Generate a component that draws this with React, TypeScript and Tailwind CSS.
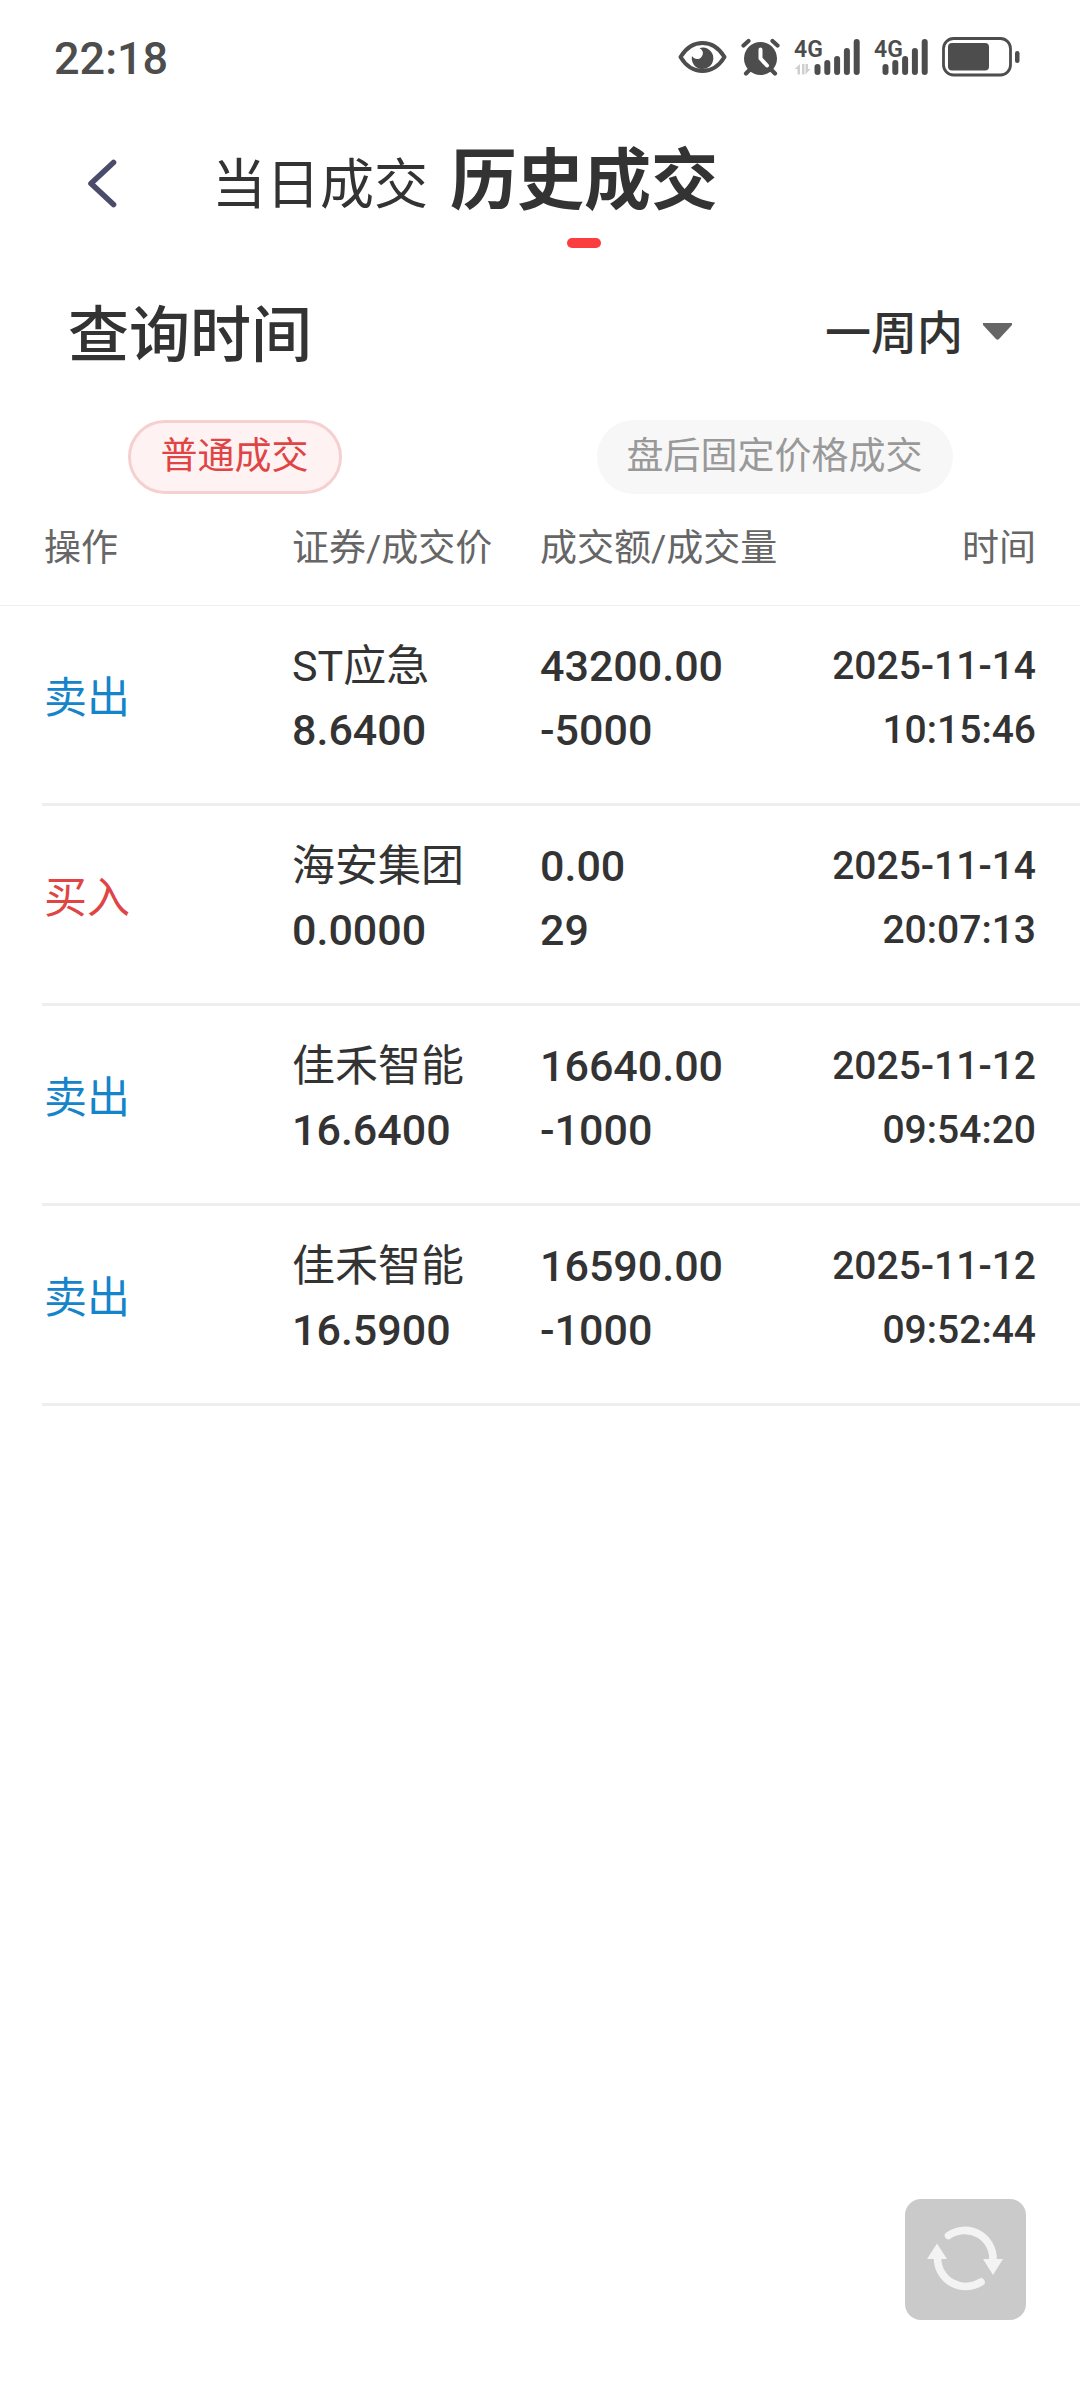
import React from "react";

type Trade = {
  side: "sell" | "buy";
  name: string;
  price: string;
  amount: string;
  volume: string;
  date: string;
  time: string;
};

const trades: Trade[] = [
  { side: "sell", name: "ST应急", price: "8.6400", amount: "43200.00", volume: "-5000", date: "2025-11-14", time: "10:15:46" },
  { side: "buy", name: "海安集团", price: "0.0000", amount: "0.00", volume: "29", date: "2025-11-14", time: "20:07:13" },
  { side: "sell", name: "佳禾智能", price: "16.6400", amount: "16640.00", volume: "-1000", date: "2025-11-12", time: "09:54:20" },
  { side: "sell", name: "佳禾智能", price: "16.5900", amount: "16590.00", volume: "-1000", date: "2025-11-12", time: "09:52:44" },
];

function EyeIcon() {
  return (
    <svg width="49" height="34" viewBox="0 0 49 34" fill="none" aria-hidden="true">
      <path d="M2.500 17C8 8 15.500 3 24.500 3S41 8 46.500 17C41 26 33.500 31 24.500 31S8 26 2.500 17Z" stroke="#4d4d4d" strokeWidth="4" strokeLinejoin="round" />
      <path d="M25 7.500A10.800 10.800 0 1 1 14 16C16 19.500 20.500 20 23 17.500C26 14.500 25.500 10 21.500 8.200Q23 7.500 25 7.500Z" fill="#4d4d4d" />
    </svg>
  );
}

function AlarmIcon() {
  return (
    <svg width="39" height="38" viewBox="0 0 39 38" fill="none" aria-hidden="true">
      <circle cx="19.500" cy="20.500" r="16.500" fill="#4d4d4d" />
      <path d="M2.500 7.500L7.500 3M36.500 7.500L31.500 3M9 31.500L5 35.500M30 31.500L34 35.500" stroke="#4d4d4d" strokeWidth="4.200" strokeLinecap="round" />
      <path d="M19.500 11.500V20.500L26 27.500" stroke="#fff" strokeWidth="4" strokeLinecap="round" strokeLinejoin="round" />
    </svg>
  );
}

function Signal({ data }: { data?: boolean }) {
  const x0 = data ? 23.5 : 11.5;
  const tops = [26.5, 22.5, 18.5, 10.5, 1.5];
  const width = data ? 66 : 54;
  return (
    <svg width={width} height="50" viewBox={`0 -6 ${width} 50`} fill="none" role="img" aria-label="4G" className="overflow-visible">
      {tops.map((t, i) => (
        <path key={t} d={`M${x0 + i * 9.8} ${t + 2.5}V34`} stroke="#4d4d4d" strokeWidth="6" strokeLinecap="round" />
      ))}
      <text x="0" y="19" fill="#4d4d4d" className="font-['Roboto',sans-serif] text-[23px] font-semibold">
        4G
      </text>
      {data && <path d="M6 26V36.500H3.500V31H0.500L6 26ZM8 26H10.500V36.500H8ZM11.500 26V36.500L16.500 31H14V26Z" fill="#cfcfcf" />}
    </svg>
  );
}

function BatteryIcon() {
  return (
    <svg width="78" height="40" viewBox="0 0 78 40" fill="none" aria-hidden="true">
      <rect x="1.500" y="1.500" width="67" height="36.500" rx="10" stroke="#4d4d4d" strokeWidth="2.800" />
      <rect x="6" y="6" width="41" height="27.500" rx="4" fill="#4d4d4d" />
      <rect x="73" y="14" width="4.500" height="12" rx="2.250" fill="#4d4d4d" />
    </svg>
  );
}

function RefreshIcon() {
  return (
    <svg width="121" height="121" viewBox="0 0 121 121" fill="none" aria-hidden="true">
      <path d="M43.500 36.500A28.300 28.300 0 0 1 88 61M76 83A28.300 28.300 0 0 1 32.500 59" stroke="#f3f3f3" strokeWidth="7.600" strokeLinecap="round" />
      <path d="M78 60H98L88 76ZM22 60H42L32 44.500Z" fill="#f3f3f3" />
    </svg>
  );
}

export default function App() {
  return (
    <div className="relative min-h-screen bg-white font-['Roboto','Noto_Sans_CJK_SC',sans-serif] text-[#333]">
      <div className="flex h-[114px] items-center justify-between pr-[60px] pl-[54px] text-[#4d4d4d]">
        <time className="pt-1 text-[45px] font-medium">22:18</time>
        <div className="flex items-center gap-3.5">
          <EyeIcon />
          <AlarmIcon />
          <Signal data />
          <Signal />
          <BatteryIcon />
        </div>
      </div>

      <header className="flex h-[144px] items-center pb-1.5 pl-[82px]">
        <button type="button" aria-label="返回" className="mr-[90px]">
          <svg width="40" height="60" viewBox="0 0 40 60" fill="none" aria-hidden="true">
            <path d="M31.500 9.500L9 30.500L31.500 51.500" stroke="#4b4b6b" strokeWidth="5.600" strokeLinecap="round" strokeLinejoin="round" />
          </svg>
        </button>
        <nav className="flex items-baseline gap-[22px]">
          <button type="button" className="text-[54px] leading-[80px]">当日成交</button>
          <button type="button" aria-current="page" className="relative text-[67px] leading-[80px] font-bold">
            历史成交
            <span className="absolute -bottom-[27px] left-1/2 h-2.5 w-[34px] -translate-x-1/2 rounded-full bg-[#fb3d40]" />
          </button>
        </nav>
      </header>

      <section className="flex h-[150px] items-center justify-between px-[68px]">
        <label htmlFor="period" className="pt-1.5 text-[61px] leading-[80px] font-medium">查询时间</label>
        <div className="flex items-center gap-5">
          <select id="period" defaultValue="week" className="appearance-none bg-transparent text-right text-[46px] leading-[80px] font-medium">
            <option value="week">一周内</option>
          </select>
          <svg width="29" height="20" viewBox="0 0 29 20" aria-hidden="true">
            <path d="M0 0H29V2L16 16Q14.500 17.500 13 16L0 2Z" fill="#666" />
          </svg>
        </div>
      </section>

      <div className="mt-3 flex justify-around text-[37px]">
        <button type="button" className="h-[74px] rounded-full border-[3px] border-[#f6d0d0] bg-[#fff2f2] px-[30px] leading-[66px] text-[#e04545]">
          普通成交
        </button>
        <button type="button" className="h-[74px] rounded-full bg-[#f7f7f7] px-[30px] leading-[72px] text-[#999]">
          盘后固定价格成交
        </button>
      </div>

      <table className="block w-full">
        <thead className="block">
          <tr className="grid grid-cols-4 border-b border-[#eee] px-11 pt-[25px] pb-[26px] text-left text-[37px] leading-[60px] whitespace-nowrap text-[#666]">
            <th className="font-normal">操作</th>
            <th className="font-normal">证券/成交价</th>
            <th className="font-normal">成交额/成交量</th>
            <th className="text-right font-normal">时间</th>
          </tr>
        </thead>
        <tbody className="block">
          {trades.map((t) => (
            <tr key={t.time} className="ml-[42px] grid grid-cols-4 border-b-[3px] border-[#eee] pt-7 pr-11 pb-[41px] pl-0.5 text-[43px] leading-[64px] whitespace-nowrap">
              <td className={t.side === "sell" ? "self-center text-[#1684ca]" : "self-center text-[#e04545]"}>
                {t.side === "sell" ? "卖出" : "买入"}
              </td>
              <td>
                <div>{t.name}</div>
                <div className="font-medium">{t.price}</div>
              </td>
              <td className="font-medium">
                <div>{t.amount}</div>
                <div>{t.volume}</div>
              </td>
              <td className="text-right text-[39px] font-medium">
                <div>{t.date}</div>
                <div>{t.time}</div>
              </td>
            </tr>
          ))}
        </tbody>
      </table>

      <button type="button" aria-label="刷新" className="fixed right-[54px] bottom-[68px] rounded-2xl bg-[#cacaca]">
        <RefreshIcon />
      </button>
    </div>
  );
}
